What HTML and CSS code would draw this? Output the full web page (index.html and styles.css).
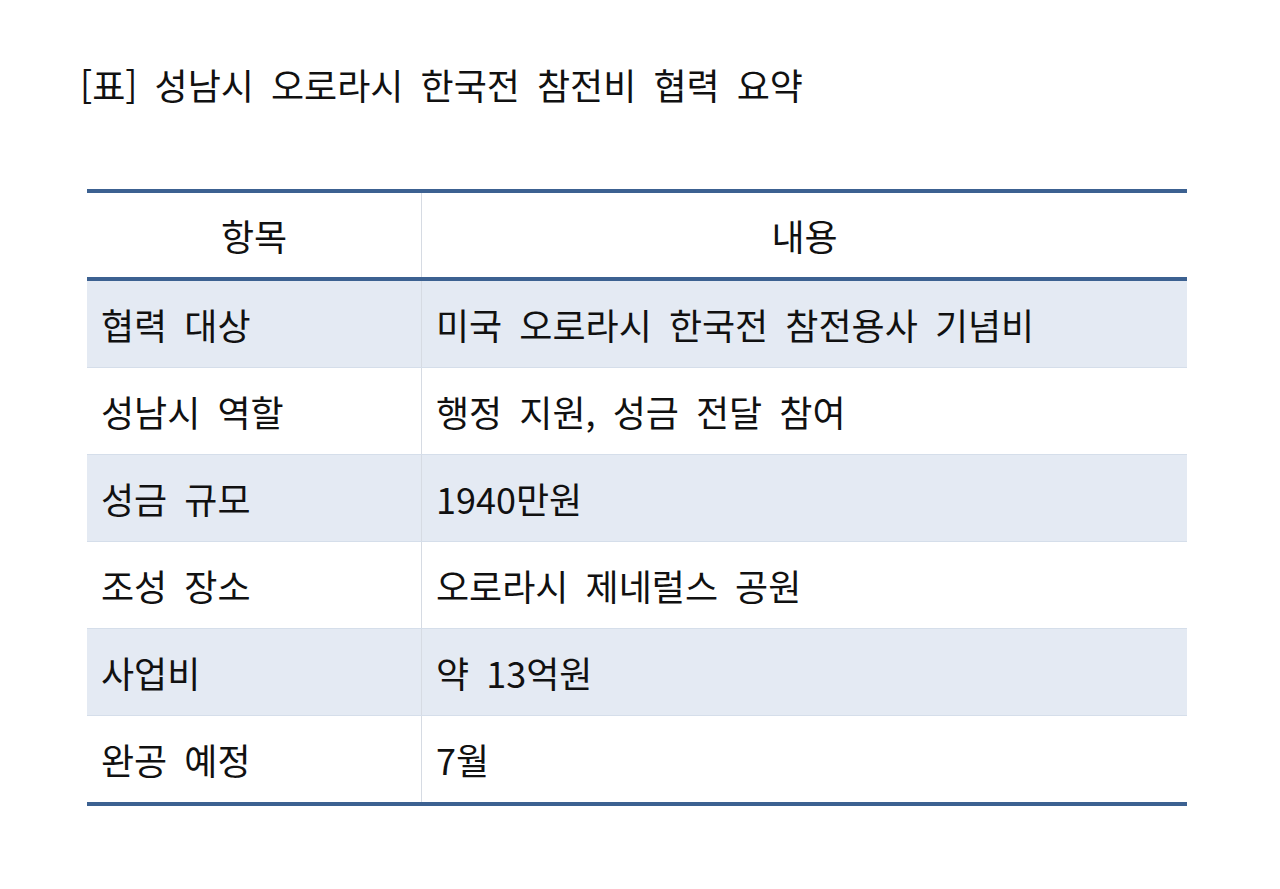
FILE: index.html
```html
<!DOCTYPE html>
<html lang="ko">
<head>
<meta charset="utf-8">
<link rel="stylesheet" href="styles.css">
</head>
<body>
<div class="page">
  <h1 class="title">[표] 성남시 오로라시 한국전 참전비 협력 요약</h1>
  <table class="summary">
    <thead>
      <tr><th class="col-key">항목</th><th class="col-val">내용</th></tr>
    </thead>
    <tbody>
      <tr class="shaded"><td>협력 대상</td><td>미국 오로라시 한국전 참전용사 기념비</td></tr>
      <tr><td>성남시 역할</td><td>행정 지원, 성금 전달 참여</td></tr>
      <tr class="shaded"><td>성금 규모</td><td>1940만원</td></tr>
      <tr><td>조성 장소</td><td>오로라시 제네럴스 공원</td></tr>
      <tr class="shaded"><td>사업비</td><td>약 13억원</td></tr>
      <tr><td>완공 예정</td><td>7월</td></tr>
    </tbody>
  </table>
</div>
</body>
</html>
```
FILE: styles.css
```css
html, body {
  margin: 0;
  padding: 0;
  background: #ffffff;
}
body {
  font-family: "Noto Sans CJK KR", "Noto Sans", sans-serif;
  color: #111111;
}
.page {
  padding: 58px 93px 0 80px;
}
.title {
  margin: 0;
  font-size: 36px;
  font-weight: 400;
  line-height: 52px;
  word-spacing: 7px;
}
.summary {
  margin-top: 79px;
  margin-left: 7px;
  width: 1100px;
  border-collapse: collapse;
  font-size: 36px;
  line-height: 40px;
  word-spacing: 7px;
}
.summary thead tr {
  border-top: 4px solid #3c6191;
  border-bottom: 4px solid #3c6191;
}
.summary th {
  height: 84px;
  font-weight: 400;
  text-align: center;
  padding: 0;
}
.col-key {
  width: 334px;
}
.summary td {
  height: 86px;
  padding: 0 0 0 14px;
  text-align: left;
  border-bottom: 1px solid #d5deea;
}
.summary td + td, .summary th + th {
  border-left: 1px solid #d6dbe3;
}
.summary td + td {
  padding-left: 14px;
}
.summary tbody tr:last-child td {
  border-bottom: 4px solid #3c6191;
}
.shaded td {
  background: #e4eaf3;
}
```
